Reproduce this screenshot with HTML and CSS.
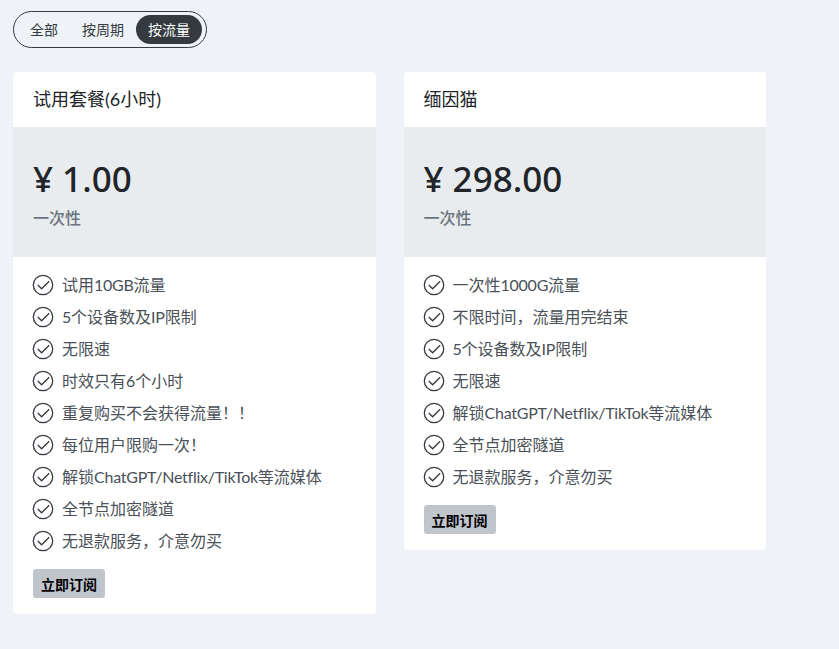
FILE: index.html
```html
<!DOCTYPE html>
<html lang="zh-CN">
<head>
<meta charset="utf-8">
<title>套餐</title>
<link rel="stylesheet" href="styles.css">
</head>
<body>
<svg class="defs" width="0" height="0" aria-hidden="true">
  <symbol id="check" viewBox="0 0 22 22">
    <circle cx="11" cy="11" r="9.7" fill="none" stroke="currentColor" stroke-width="1.3"/>
    <path d="M5.8 11l3.8 3.8 7.6-7.6" fill="none" stroke="currentColor" stroke-width="1.3"/>
  </symbol>
</svg>
<main class="page">
  <div class="toggle">
    <button class="tab">全部</button>
    <button class="tab">按周期</button>
    <button class="tab active">按流量</button>
  </div>
  <div class="plans">
    <section class="card">
      <h2 class="card-title">试用套餐(6小时)</h2>
      <div class="price-box">
        <div class="price">¥ 1.00</div>
        <div class="period">一次性</div>
      </div>
      <div class="card-body">
        <ul class="features">
          <li><svg class="icon"><use href="#check"/></svg><span class="label">试用<span class="latin">10GB</span>流量</span></li>
          <li><svg class="icon"><use href="#check"/></svg><span class="label"><span class="latin">5</span>个设备数及<span class="latin">IP</span>限制</span></li>
          <li><svg class="icon"><use href="#check"/></svg><span class="label">无限速</span></li>
          <li><svg class="icon"><use href="#check"/></svg><span class="label">时效只有6个小时</span></li>
          <li><svg class="icon"><use href="#check"/></svg><span class="label">重复购买不会获得流量！！</span></li>
          <li><svg class="icon"><use href="#check"/></svg><span class="label">每位用户限购一次！</span></li>
          <li><svg class="icon"><use href="#check"/></svg><span class="label">解锁<span class="latin">ChatGPT/Netflix/TikTok</span>等流媒体</span></li>
          <li><svg class="icon"><use href="#check"/></svg><span class="label">全节点加密隧道</span></li>
          <li><svg class="icon"><use href="#check"/></svg><span class="label">无退款服务，介意勿买</span></li>
        </ul>
        <button class="subscribe">立即订阅</button>
      </div>
    </section>
    <section class="card">
      <h2 class="card-title">缅因猫</h2>
      <div class="price-box">
        <div class="price">¥ 298.00</div>
        <div class="period">一次性</div>
      </div>
      <div class="card-body">
        <ul class="features">
          <li><svg class="icon"><use href="#check"/></svg><span class="label">一次性<span class="latin">1000G</span>流量</span></li>
          <li><svg class="icon"><use href="#check"/></svg><span class="label">不限时间，流量用完结束</span></li>
          <li><svg class="icon"><use href="#check"/></svg><span class="label"><span class="latin">5</span>个设备数及<span class="latin">IP</span>限制</span></li>
          <li><svg class="icon"><use href="#check"/></svg><span class="label">无限速</span></li>
          <li><svg class="icon"><use href="#check"/></svg><span class="label">解锁<span class="latin">ChatGPT/Netflix/TikTok</span>等流媒体</span></li>
          <li><svg class="icon"><use href="#check"/></svg><span class="label">全节点加密隧道</span></li>
          <li><svg class="icon"><use href="#check"/></svg><span class="label">无退款服务，介意勿买</span></li>
        </ul>
        <button class="subscribe">立即订阅</button>
      </div>
    </section>
  </div>
</main>
</body>
</html>
```
FILE: styles.css
```css
* { box-sizing: border-box; }
html, body { margin: 0; height: 100%; }
body {
  background: #eff2f7;
  color: #212529;
  font-family: Lato, "Noto Sans CJK SC", sans-serif;
  font-size: 16px;
  overflow: hidden;
}
.defs { position: absolute; }
.page { padding: 11px 0 0 13px; }
.toggle {
  display: inline-flex;
  align-items: center;
  height: 37px;
  padding: 0 4px;
  border: 1px solid #343a40;
  border-radius: 19px;
}
.tab {
  height: 29px;
  padding: 0 12px;
  border: 0;
  border-radius: 15px;
  background: transparent;
  color: #343a40;
  font: inherit;
  font-size: 14px;
  line-height: 29px;
}
.active { background: #343a40; color: #fff; }
.plans {
  display: flex;
  align-items: flex-start;
  gap: 28px;
  margin-top: 24px;
}
.card {
  width: 362.5px;
  background: #fff;
  border-radius: 4px;
  overflow: hidden;
}
.card-title {
  margin: 0;
  height: 55px;
  padding: 0 20px;
  font-size: 18px;
  font-weight: 400;
  line-height: 55px;
  color: #212529;
}
.price-box {
  height: 130px;
  padding: 31px 20px 0;
  background: #e9ecef;
}
.price {
  font-family: "Noto Sans", "Noto Sans CJK SC", sans-serif;
  font-size: 35px;
  font-weight: 500;
  line-height: 42px;
  color: #212529;
}
.period {
  margin-top: 6px;
  font-size: 16px;
  font-weight: 500;
  line-height: 24px;
  color: #6c757d;
}
.card-body { padding: 12px 20px 16px; }
.features { margin: 0; padding: 0; list-style: none; }
.features li {
  display: flex;
  align-items: center;
  height: 32px;
  color: #495057;
  font-size: 16px;
}
.label { margin-bottom: 2px; }
.latin { letter-spacing: -0.25px; }
.icon {
  flex: none;
  width: 22px;
  height: 22px;
  margin-left: -1px;
  margin-right: 8px;
  color: #343a40;
}
.subscribe {
  display: block;
  width: 72px;
  height: 29px;
  margin-top: 12px;
  padding: 0;
  border: 0;
  border-radius: 3px;
  background: #c0c5cc;
  color: #000;
  font: inherit;
  font-size: 14px;
  font-weight: 700;
}
```
